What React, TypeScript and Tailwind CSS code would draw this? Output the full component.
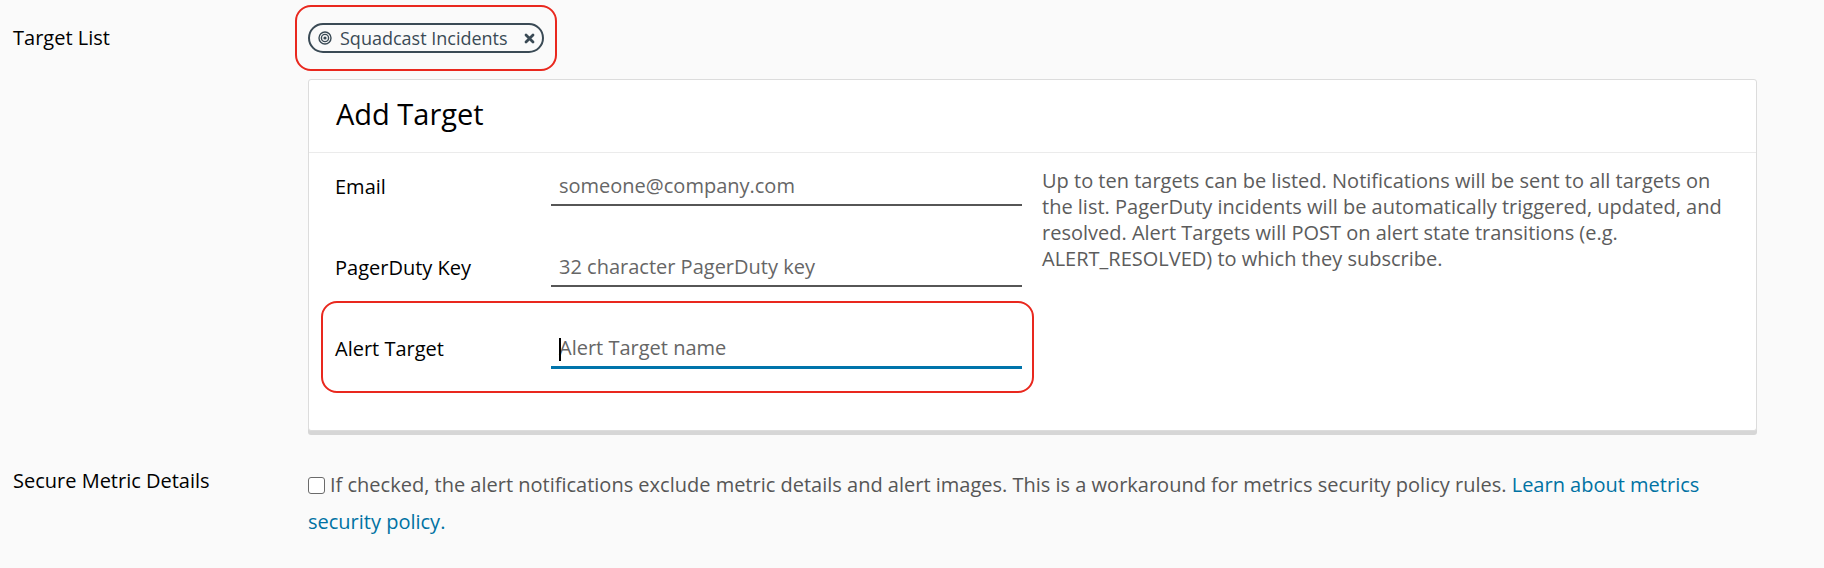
import React from "react";

const TargetIcon = () => (
  <svg width="14" height="14" viewBox="0 0 14 14" className="shrink-0">
    <circle cx="7" cy="7" r="6" fill="none" stroke="#3a4a55" strokeWidth="1.4" />
    <circle cx="7" cy="7" r="3.6" fill="none" stroke="#3a4a55" strokeWidth="1.4" />
    <circle cx="7" cy="7" r="1.6" fill="#3a4a55" />
  </svg>
);

const CloseIcon = () => (
  <svg width="11" height="11" viewBox="0 0 11 11" className="shrink-0">
    <path d="M2 2 L9 9 M9 2 L2 9" stroke="#3a4a55" strokeWidth="2.8" strokeLinecap="round" />
  </svg>
);

const FormRow = ({
  label,
  placeholder,
  focused,
}: {
  label: string;
  placeholder: string;
  focused?: boolean;
}) => (
  <div className="relative flex items-center">
    <div className="w-[216px] shrink-0 text-[20px] leading-[28px] text-black">{label}</div>
    <div
      className={
        focused
          ? "relative flex h-[40px] w-[471px] shrink-0 items-center border-b-[3px] border-[#0074ab] pl-[8px]"
          : "relative flex h-[39px] w-[471px] shrink-0 items-center border-b-2 border-[#565656] pl-[8px]"
      }
    >
      {focused && <span className="absolute left-[8px] top-[9px] h-[23px] w-[2px] bg-black" />}
      <span className="text-[20px] leading-[28px] text-[#666]">{placeholder}</span>
    </div>
    {focused && (
      <div className="pointer-events-none absolute bottom-[-24px] left-[-14px] right-[-12px] top-[-28px] rounded-[16px] border-2 border-[#e9281e]" />
    )}
  </div>
);

export default function App() {
  return (
    <div className="min-h-[568px] w-full bg-[#fafafa] font-['Open_Sans',sans-serif] text-black">
      {/* Target list */}
      <div className="flex pt-[23px]">
        <div className="w-[308px] shrink-0 pl-[13px] text-[20px] leading-[30px]">Target List</div>
        <div className="flex-1 pr-[67px]">
          <div className="relative inline-flex h-[30px] items-center gap-[8px] rounded-full border-2 border-[#3a4a55] pl-[8px] pr-[7px] text-[#3a4a55]">
            <TargetIcon />
            <span className="text-[18px] leading-[24px]">Squadcast Incidents</span>
            <span className="ml-[8px] flex items-center">
              <CloseIcon />
            </span>
            <div className="pointer-events-none absolute bottom-[-20px] left-[-15px] right-[-15px] top-[-20px] rounded-[16px] border-2 border-[#e9281e]" />
          </div>

          {/* Add Target card */}
          <div className="mt-[26px] rounded-[3px] border border-[#dcdcdc] bg-white shadow-[0_4px_0_0_#d6d6d6]">
            <div className="flex h-[73px] items-center border-b border-[#ebebeb] pb-[4px] pl-[27px] text-[29px] leading-[36px] text-black">
              Add Target
            </div>
            <div className="flex gap-[20px] pb-[61px] pl-[26px] pt-[14px]">
              <div className="flex w-[687px] shrink-0 flex-col gap-[42px]">
                <FormRow label="Email" placeholder="someone@company.com" />
                <FormRow label="PagerDuty Key" placeholder="32 character PagerDuty key" />
                <FormRow label="Alert Target" placeholder="Alert Target name" focused />
              </div>
              <p className="w-[688px] flex-none pt-[1px] text-[20px] leading-[26px] text-[#5c5c5c]">
                Up to ten targets can be listed. Notifications will be sent to all targets on the list. PagerDuty
                incidents will be automatically triggered, updated, and resolved. Alert Targets will POST on alert
                state transitions (e.g. ALERT_RESOLVED) to which they subscribe.
              </p>
            </div>
          </div>
        </div>
      </div>

      {/* Secure metric details */}
      <div className="mt-[35px] flex pb-[20px]">
        <div className="w-[308px] shrink-0 pl-[13px] text-[20px] leading-[30px]">Secure Metric Details</div>
        <p className="flex-1 pr-[67px] text-[20px] leading-[37px] text-[#565656]">
          <span className="mr-[5px] inline-block h-[17px] w-[17px] rounded-[3px] border border-[#6b6b6b] bg-white align-[-2px]" />
          If checked, the alert notifications exclude metric details and alert images. This is a workaround for
          metrics security policy rules.{" "}
          <a className="text-[#0072a3]">Learn about metrics security policy.</a>
        </p>
      </div>
    </div>
  );
}
